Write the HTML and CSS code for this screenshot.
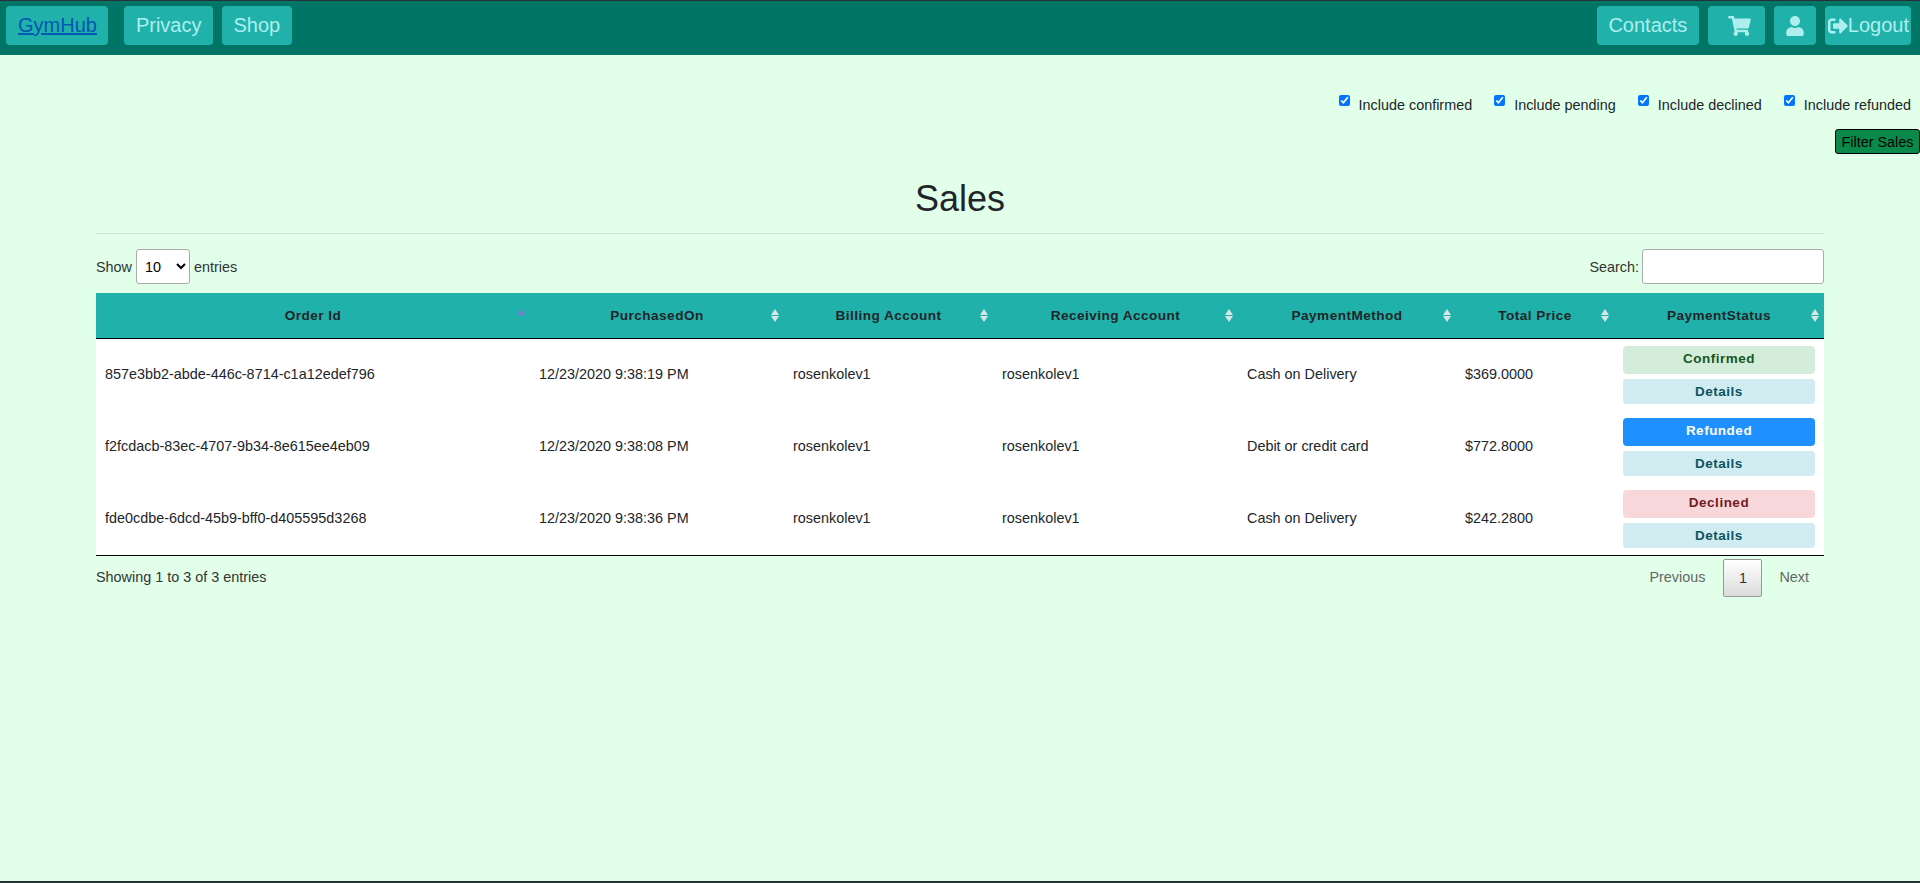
FILE: index.html
```html
<!DOCTYPE html>
<html lang="en">

<head>
    <meta charset="UTF-8">
    <meta name="viewport" content="width=device-width, initial-scale=1.0">
    <title>Sales - GymHub</title>
    <link rel="stylesheet" href="styles.css">
</head>

<body>
    <nav class="navbar">
        <div class="nav-group">
            <a class="nav-btn brand" href="#">GymHub</a>
            <a class="nav-btn first-link" href="#">Privacy</a>
            <a class="nav-btn" href="#">Shop</a>
        </div>
        <div class="nav-group">
            <a class="nav-btn" href="#">Contacts</a>
            <a class="nav-btn cart" href="#" aria-label="Cart">
                <svg class="icon-cart" viewBox="0 0 576 512"><path fill="currentColor" d="M528.12 301.319l47.273-208C578.806 78.301 567.391 64 551.99 64H159.208l-9.166-44.81C147.758 8.021 137.93 0 126.529 0H24C10.745 0 0 10.745 0 24v16c0 13.255 10.745 24 24 24h69.883l70.248 343.435C147.325 417.1 136 435.222 136 456c0 30.928 25.072 56 56 56s56-25.072 56-56c0-15.674-6.447-29.835-16.824-40h209.647C430.447 426.165 424 440.326 424 456c0 30.928 25.072 56 56 56s56-25.072 56-56c0-22.172-12.888-41.332-31.579-50.405l5.517-24.276c3.413-15.018-8.002-29.319-23.403-29.319H218.117l-6.545-32h293.145c11.206 0 20.92-7.754 23.403-18.681z"/></svg>
            </a>
            <a class="nav-btn user" href="#" aria-label="Account">
                <svg class="icon-user" viewBox="0 0 448 512"><path fill="currentColor" d="M224 256c70.7 0 128-57.3 128-128S294.7 0 224 0 96 57.3 96 128s57.3 128 128 128zm89.6 32h-16.7c-22.2 10.2-46.9 16-72.9 16s-50.6-5.8-72.9-16h-16.7C60.2 288 0 348.2 0 422.4V464c0 26.5 21.5 48 48 48h352c26.5 0 48-21.5 48-48v-41.6c0-74.2-60.2-134.4-134.4-134.4z"/></svg>
            </a>
            <a class="nav-btn logout" href="#">
                <svg class="icon-logout" viewBox="0 0 512 512"><path fill="currentColor" d="M497 273L329 441c-15 15-41 4.5-41-17v-96H152c-13.3 0-24-10.7-24-24v-96c0-13.3 10.7-24 24-24h136V88c0-21.4 25.9-32 41-17l168 168c9.3 9.4 9.3 24.6 0 34zM192 436v-40c0-6.6-5.4-12-12-12H96c-17.7 0-32-14.3-32-32V160c0-17.7 14.3-32 32-32h84c6.6 0 12-5.4 12-12V76c0-6.6-5.4-12-12-12H96c-53 0-96 43-96 96v192c0 53 43 96 96 96h84c6.6 0 12-5.4 12-12z"/></svg>Logout
            </a>
        </div>
    </nav>

    <form class="filters">
        <div class="filter-row">
            <label class="filter-item"><input type="checkbox" checked>Include confirmed</label>
            <label class="filter-item"><input type="checkbox" checked>Include pending</label>
            <label class="filter-item"><input type="checkbox" checked>Include declined</label>
            <label class="filter-item"><input type="checkbox" checked>Include refunded</label>
        </div>
        <button class="filter-btn" type="button">Filter Sales</button>
    </form>

    <main class="container">
        <h1 class="page-title">Sales</h1>
        <hr class="title-rule">

        <div class="table-top">
            <label class="length">Show
                <select>
                    <option>10</option>
                    <option>25</option>
                    <option>50</option>
                    <option>100</option>
                </select>
                entries</label>
            <label class="search">Search:<input type="search"></label>
        </div>

        <table class="sales">
            <colgroup>
                <col class="c-id">
                <col class="c-date">
                <col class="c-bill">
                <col class="c-recv">
                <col class="c-method">
                <col class="c-total">
                <col class="c-status">
            </colgroup>
            <thead>
                <tr>
                    <th class="sorted">Order Id</th>
                    <th>PurchasedOn</th>
                    <th>Billing Account</th>
                    <th>Receiving Account</th>
                    <th>PaymentMethod</th>
                    <th>Total Price</th>
                    <th>PaymentStatus</th>
                </tr>
            </thead>
            <tbody>
                <tr>
                    <td>857e3bb2-abde-446c-8714-c1a12edef796</td>
                    <td>12/23/2020 9:38:19 PM</td>
                    <td>rosenkolev1</td>
                    <td>rosenkolev1</td>
                    <td>Cash on Delivery</td>
                    <td>$369.0000</td>
                    <td class="status-cell">
                        <div class="badge confirmed">Confirmed</div>
                        <a class="details" href="#">Details</a>
                    </td>
                </tr>
                <tr>
                    <td>f2fcdacb-83ec-4707-9b34-8e615ee4eb09</td>
                    <td>12/23/2020 9:38:08 PM</td>
                    <td>rosenkolev1</td>
                    <td>rosenkolev1</td>
                    <td>Debit or credit card</td>
                    <td>$772.8000</td>
                    <td class="status-cell">
                        <div class="badge refunded">Refunded</div>
                        <a class="details" href="#">Details</a>
                    </td>
                </tr>
                <tr>
                    <td>fde0cdbe-6dcd-45b9-bff0-d405595d3268</td>
                    <td>12/23/2020 9:38:36 PM</td>
                    <td>rosenkolev1</td>
                    <td>rosenkolev1</td>
                    <td>Cash on Delivery</td>
                    <td>$242.2800</td>
                    <td class="status-cell">
                        <div class="badge declined">Declined</div>
                        <a class="details" href="#">Details</a>
                    </td>
                </tr>
            </tbody>
        </table>

        <div class="table-bottom">
            <div class="info">Showing 1 to 3 of 3 entries</div>
            <div class="paging">
                <a class="page-link" href="#">Previous</a>
                <a class="page-current" href="#">1</a>
                <a class="page-link" href="#">Next</a>
            </div>
        </div>
    </main>

    <footer class="page-end"></footer>
</body>

</html>
```

FILE: styles.css
```css
* {
    box-sizing: border-box;
}
body {
    margin: 0;
    min-height: 100vh;
    display: flex;
    flex-direction: column;
    background-color: #e1ffe9;
    font-family: "Liberation Sans", Arial, sans-serif;
    font-size: 14.4px;
    color: #212529;
}

/* top bar */
.navbar {
    display: flex;
    justify-content: space-between;
    height: 55px;
    padding: 5px 9px 10px 6px;
    background-color: #007566;
    border-top: 1px solid #263238;
}
.nav-group {
    display: flex;
    gap: 9px;
}
.nav-btn {
    display: flex;
    align-items: center;
    height: 39px;
    padding: 0 11.5px;
    border-radius: 4px;
    background-color: #20b2aa;
    color: #afeeee;
    font-size: 20px;
    text-decoration: none;
}
.brand {
    padding: 0 11.5px 0 12px;
    color: #0056b3;
    text-decoration: underline;
}
.first-link {
    margin-left: 7px;
}
.cart {
    padding: 0 14px 0 20px;
}
.user {
    padding: 0 12px;
}
.logout {
    padding: 0 2px 0 3px;
}
.icon-cart {
    width: 23px;
    height: 20px;
}
.icon-user {
    width: 18px;
    height: 20px;
}
.icon-logout {
    width: 20px;
    height: 20px;
}

/* status filter */
.filters {
    display: flex;
    flex-direction: column;
    align-items: flex-end;
    padding-top: 39px;
}
.filter-row {
    display: flex;
    gap: 22px;
    padding-right: 9px;
}
.filter-item {
    display: flex;
    line-height: 22px;
}
.filter-item input {
    width: 11px;
    height: 11px;
    margin: 1px 9px 0 0;
}
.filter-btn {
    height: 25px;
    margin-top: 13px;
    padding: 0 5.5px;
    border: 1px solid #000;
    border-radius: 3px;
    background-color: #0a8a4a;
    color: #000;
    font-family: inherit;
    font-size: 14.4px;
}

/* table block */
.container {
    width: 1728px;
    margin: 0 auto;
}
.page-title {
    margin: 22px 0 0;
    font-size: 36px;
    font-weight: 400;
    line-height: 45px;
    text-align: center;
}
.title-rule {
    margin: 12px 0 15px;
    border: 0;
    border-top: 1px solid #cfe6d6;
}
.table-top {
    display: flex;
    justify-content: space-between;
    align-items: center;
    height: 35px;
    margin-bottom: 9px;
    color: #333;
}
.length select {
    width: 54px;
    height: 35px;
    margin: 0;
    padding: 0 4px;
    border: 1px solid #aaa;
    border-radius: 3px;
    background-color: #fff;
    font-family: inherit;
    font-size: 14.4px;
}
.search {
    display: flex;
    align-items: center;
    gap: 3px;
}
.search input {
    width: 182px;
    height: 35px;
    border: 1px solid #aaa;
    border-radius: 3px;
    background-color: #fff;
}

.sales {
    width: 100%;
    table-layout: fixed;
    border-collapse: separate;
    border-spacing: 0;
    background-color: #fff;
    border-bottom: 1px solid #000;
}
.c-id { width: 434px; }
.c-date { width: 254px; }
.c-bill { width: 209px; }
.c-recv { width: 245px; }
.c-method { width: 218px; }
.c-total { width: 158px; }
.c-status { width: 210px; }

.sales th {
    position: relative;
    height: 46px;
    padding: 0 9px;
    background-color: #20b2aa;
    border-bottom: 1px solid #000;
    font-size: 13.6px;
    letter-spacing: 0.45px;
    text-align: center;
}
/* sort arrows */
.sales th::before,
.sales th::after {
    content: "";
    position: absolute;
    right: 5px;
    border-left: 4px solid transparent;
    border-right: 4px solid transparent;
}
.sales th::before {
    top: 16px;
    border-bottom: 6px solid #d5e6e5;
}
.sales th::after {
    top: 23px;
    border-top: 6px solid #d5e6e5;
}
.sales th.sorted::before {
    border-bottom-color: #7a7fcf;
}
.sales th.sorted::after {
    display: none;
}
.sales td {
    height: 72px;
    padding: 0 9px 2px;
    vertical-align: middle;
}
.sales .status-cell {
    padding: 7px 9px;
}
.badge,
.details {
    display: block;
    border-radius: 4px;
    font-size: 13.5px;
    font-weight: 700;
    letter-spacing: 0.5px;
    text-align: center;
    text-decoration: none;
}
.badge {
    height: 28px;
    margin-bottom: 5px;
    line-height: 25px;
}
.details {
    height: 25px;
    line-height: 25px;
    background-color: #d1ecf1;
    color: #0c5460;
}
.confirmed {
    background-color: #d4edda;
    color: #155724;
}
.refunded {
    background-color: #1e90ff;
    color: #fff;
}
.declined {
    background-color: #f8d7da;
    color: #721c24;
}

.table-bottom {
    display: flex;
    justify-content: space-between;
    align-items: center;
    height: 38px;
    margin-top: 3px;
    color: #333;
}
.info {
    padding-bottom: 2px;
}
.paging {
    display: flex;
    align-items: center;
    padding-right: 15px;
}
.page-link {
    padding-bottom: 2px;
    color: #666;
    text-decoration: none;
}
.page-current {
    width: 39px;
    height: 38px;
    margin: 0 17px 0 18px;
    border: 1px solid #979797;
    border-radius: 2px;
    background: linear-gradient(to bottom, #fff 0%, #dcdcdc 100%);
    color: #333;
    line-height: 36px;
    text-align: center;
    text-decoration: none;
}

.page-end {
    margin-top: auto;
    height: 2px;
    background-color: #263238;
}
```
